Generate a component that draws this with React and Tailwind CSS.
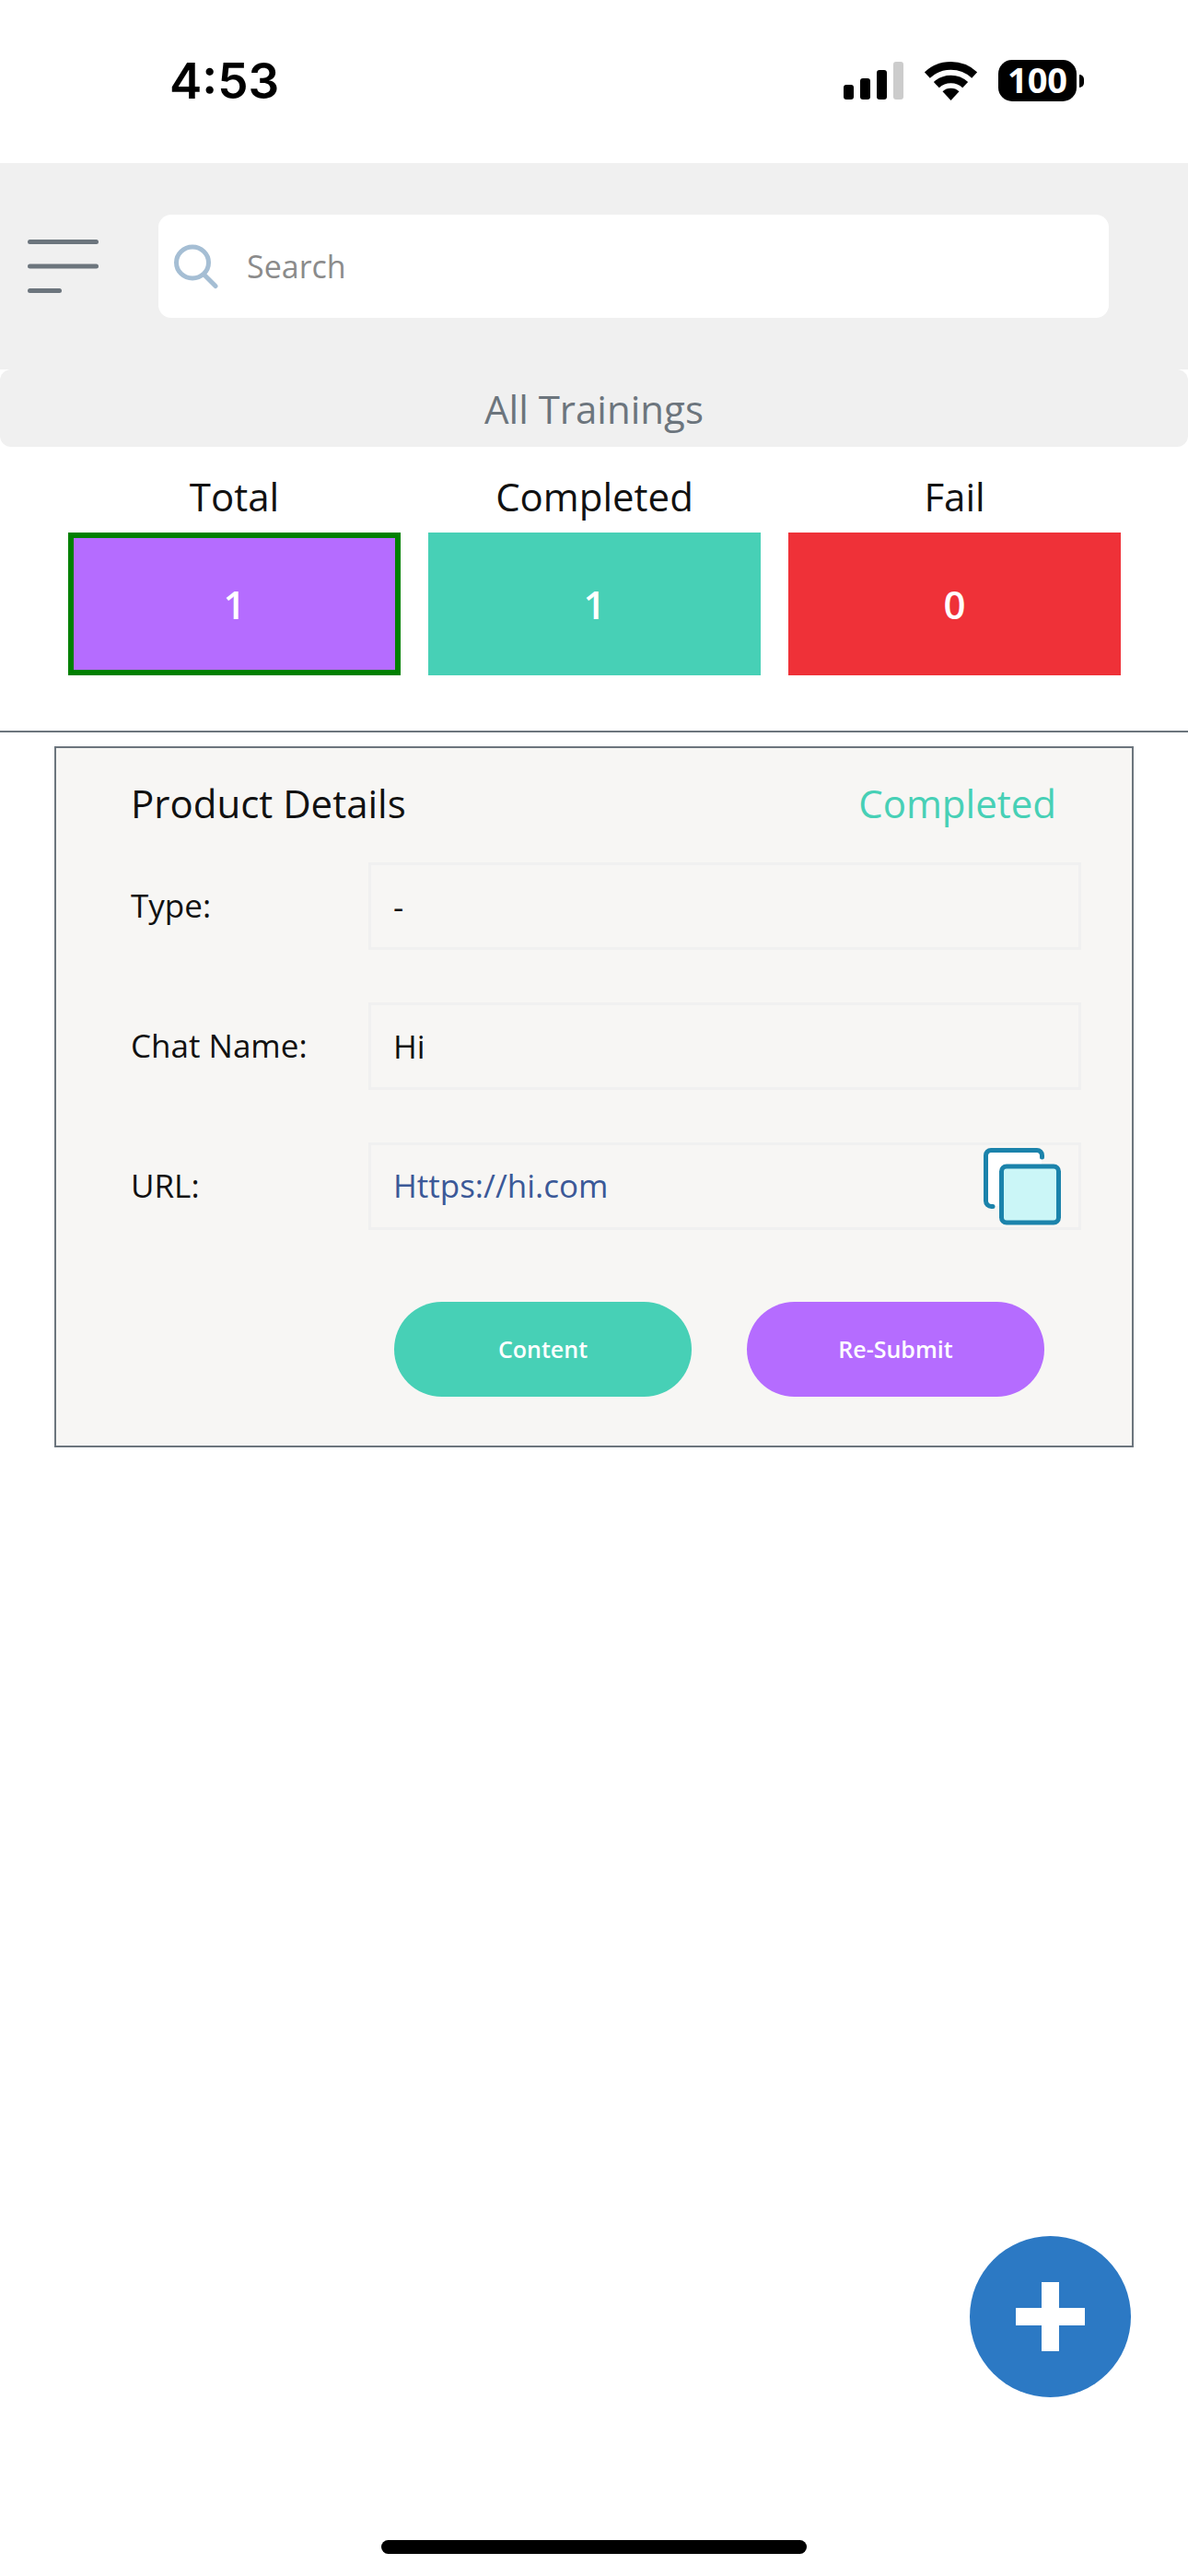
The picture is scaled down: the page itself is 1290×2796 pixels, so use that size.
import { useState } from 'react';

const STATS = [
  { key: 'total',     label: 'Total',     value: 1, bg: 'bg-[#b56cff]' },
  { key: 'completed', label: 'Completed', value: 1, bg: 'bg-[#47d0b6]' },
  { key: 'fail',      label: 'Fail',      value: 0, bg: 'bg-[#ef3138]' },
];

const FIELDS = [
  { id: 'type',     label: 'Type:',      value: '-'  },
  { id: 'chatName', label: 'Chat Name:', value: 'Hi' },
];

function SignalIcon() {
  return (
    <svg className="w-[65px] h-[41px]" viewBox="0 0 65 41">
      <rect x="0" y="25" width="11" height="16" rx="3" />
      <rect x="18" y="18" width="11" height="23" rx="3" />
      <rect x="36" y="9" width="11" height="32" rx="3" />
      <rect x="54" y="0" width="11" height="41" rx="3" fill="#cccccc" />
    </svg>
  );
}

function WifiIcon() {
  return (
    <svg className="w-[57px] h-[42px]" viewBox="0 0 171 126">
      <path d="M8.5 43.4A113 113 0 0 1 162.5 43.4" fill="none" stroke="#000" strokeWidth="26" />
      <path d="M38.5 75.6A69 69 0 0 1 132.5 75.6" fill="none" stroke="#000" strokeWidth="26" />
      <path d="M85.5 126L58.5 97A40 40 0 0 1 112.5 97Z" />
    </svg>
  );
}

function StatusBar() {
  return (
    <div className="flex items-center justify-between h-[175px] mb-0.5 pl-[184px] pr-[113px]">
      <span className="font-['Inter'] text-[53px] leading-[54px] font-semibold text-black">4:53</span>
      <div className="flex items-center">
        <SignalIcon />
        <div className="ml-[23px]"><WifiIcon /></div>
        <div className="flex items-center ml-[23px] gap-[3px]">
          <span className="flex items-center justify-center w-[85px] h-[45px] pb-1 rounded-[15px] bg-black text-white text-[38px] leading-none font-bold">
            100
          </span>
          <span className="w-[5px] h-[14px] rounded-r-full bg-black" />
        </div>
      </div>
    </div>
  );
}

function Header() {
  return (
    <header className="flex items-center h-[224px] pl-[30px] pr-[86px] bg-[#f0f0f0]">
      <button type="button" aria-label="Open menu" className="shrink-0">
        <svg className="w-[77px] h-[58px]" viewBox="0 0 77 58">
          <g stroke="#6c757d" strokeWidth="5" strokeLinecap="round">
            <path d="M2.5 2.5h72" />
            <path d="M2.5 29h72" />
            <path d="M2.5 55.5h32" />
          </g>
        </svg>
      </button>
      <label className="flex flex-1 items-center min-w-0 h-28 ml-[65px] pl-4 rounded-[14px] bg-white">
        <svg className="shrink-0 w-[50px] h-[50px]" viewBox="0 0 50 50" fill="none" stroke="#a5bed4" strokeWidth="5" strokeLinecap="round">
          <ellipse cx="21" cy="21" rx="17.5" ry="17" />
          <path d="M34 34.5L46 46.5" />
        </svg>
        <input
          type="search"
          aria-label="Search"
          placeholder="Search"
          className="flex-1 min-w-0 ml-[30px] text-[34px] leading-[48px] text-[#111] placeholder:text-[#8b8b8b] outline-none"
        />
      </label>
    </header>
  );
}

function CopyIcon() {
  return (
    <svg className="w-[84px] h-[84px]" viewBox="0 0 84 84" stroke="#1b83ab" strokeWidth="5" strokeLinecap="round" strokeLinejoin="round">
      <path d="M10 63h10V20h43V8a6 6 0 0 0-6-5.500H9A6.500 6.500 0 0 0 2.500 9V57A6.500 6.500 0 0 0 9 63Z" fill="#fff" stroke="none" />
      <path d="M63.500 10V8a5.500 5.500 0 0 0-5.500-5.500H8A5.500 5.500 0 0 0 2.500 8V57.500A6 6 0 0 0 8.500 63.500H10" fill="none" />
      <rect x="19.500" y="20" width="62" height="61" rx="5.500" fill="#cbf6f7" />
    </svg>
  );
}

function TrainingCard() {
  return (
    <section className="mt-[15px] mx-[59px] pt-[30px] pb-[53px] pl-[81px] pr-[55px] border-2 border-[#6c757d] bg-[#f7f6f4]">
      <div className="flex items-center justify-between h-[58px] pr-[27px] text-[42px]">
        <h2 className="text-[#111]">Product Details</h2>
        <span className="text-[#47d0b6]">Completed</span>
      </div>

      <div className="flex flex-col gap-[57px] mt-9 text-[35px] text-[#111]">
        {FIELDS.map(({ id, label, value }) => (
          <div key={id} className="flex items-center">
            <label htmlFor={id} className="w-[258px] shrink-0">{label}</label>
            <input
              id={id}
              readOnly
              value={value}
              className="flex-1 min-w-0 h-[95px] px-6 border-[3px] border-[#f0f0f0] outline-none"
            />
          </div>
        ))}
        <div className="flex items-center">
          <span className="w-[258px] shrink-0">URL:</span>
          <div className="flex flex-1 items-center justify-between min-w-0 h-[95px] pl-6 pr-[19px] border-[3px] border-[#f0f0f0]">
            <a href="https://hi.com" className="text-[#3b5998]">Https://hi.com</a>
            <button type="button" aria-label="Copy URL"><CopyIcon /></button>
          </div>
        </div>
      </div>

      <div className="flex gap-[60px] mt-[78px] pl-[286px] pr-10 text-[25px] font-semibold text-white">
        <button type="button" className="flex-1 h-[103px] rounded-full bg-[#47d0b6]">Content</button>
        <button type="button" className="flex-1 h-[103px] rounded-full bg-[#b56cff]">Re-Submit</button>
      </div>
    </section>
  );
}

export default function App() {
  const [selected, setSelected] = useState('total');

  return (
    <div className="min-h-screen bg-white font-['Open_Sans','Noto_Sans',sans-serif]">
      <StatusBar />
      <Header />

      <h1 className="flex items-center justify-center h-[84px] rounded-xl bg-[#f0f0f0] text-[42px] text-[#6c757d]">
        All Trainings
      </h1>

      <div className="grid grid-cols-3 gap-[30px] pl-[74px] pr-[73px] pt-[26px] pb-[60px] border-b-2 border-[#6c757d]">
        {STATS.map(({ key, label, value, bg }) => (
          <div key={key} className="flex flex-col">
            <span id={key} className="h-[67px] text-center text-[42px] leading-[56px] text-[#111]">{label}</span>
            <button
              type="button"
              aria-labelledby={key}
              onClick={() => setSelected(key)}
              className={`h-[155px] text-[42px] font-semibold text-white ${bg} ${selected === key ? 'border-[6px] border-[#008000]' : ''}`}
            >
              {value}
            </button>
          </div>
        ))}
      </div>

      <TrainingCard />

      <button
        type="button"
        aria-label="Add training"
        className="fixed right-[62px] bottom-[194px] flex items-center justify-center size-[175px] rounded-full bg-[#2c79c4]"
      >
        <svg className="w-[75px] h-[75px]" viewBox="0 0 75 75" fill="#fff">
          <path d="M28 0h19v28h28v19H47v28H28V47H0V28h28z" />
        </svg>
      </button>

      {/* home indicator */}
      <div className="fixed inset-x-0 bottom-6 flex justify-center">
        <span className="w-[462px] h-[15px] rounded-full bg-black" />
      </div>
    </div>
  );
}
